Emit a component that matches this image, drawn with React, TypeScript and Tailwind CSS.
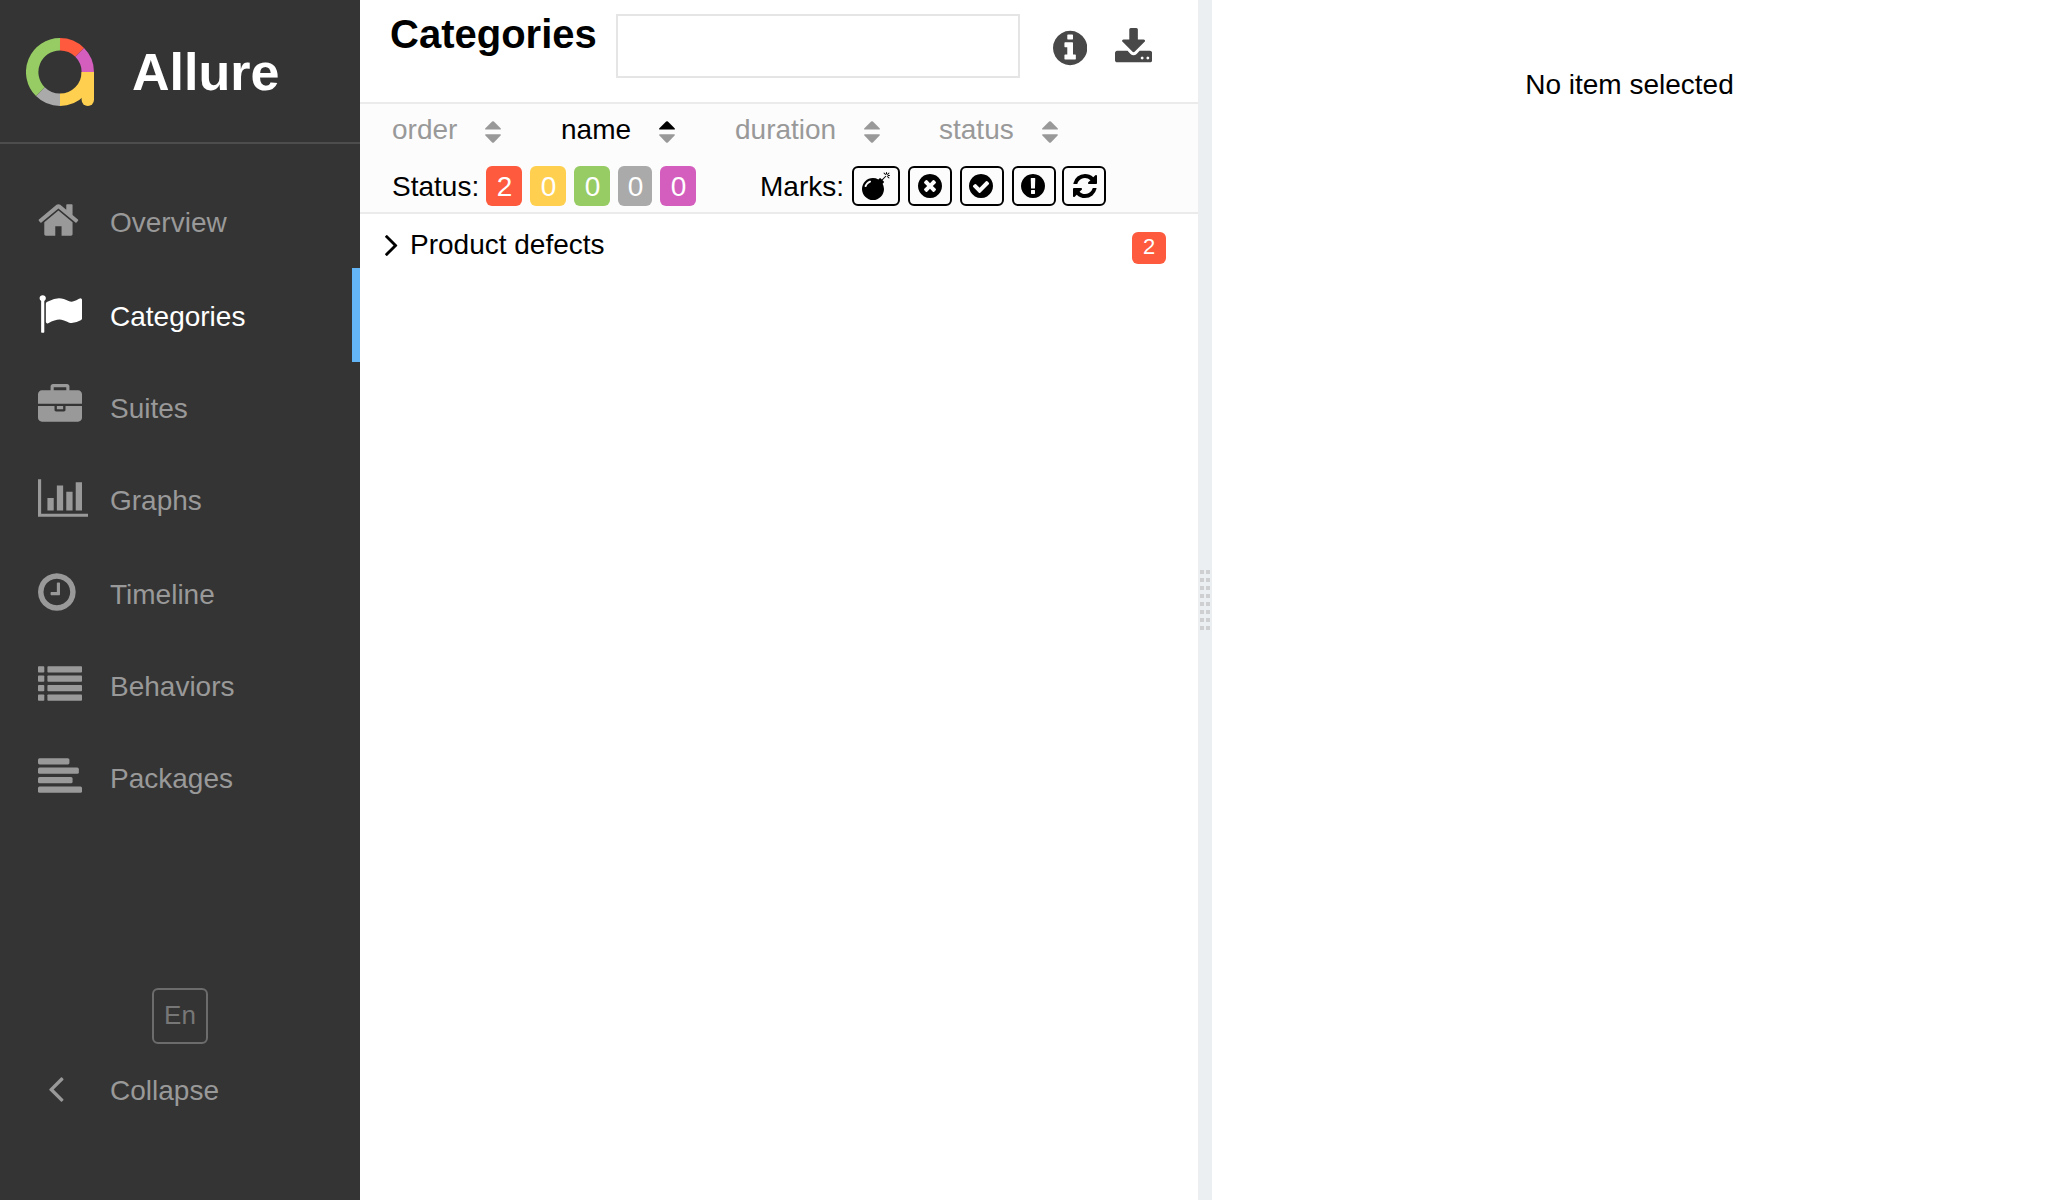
import React from "react";

const DISC =
  "M1664 896q0 209-103 385.5t-279.5 279.5-385.5 103-385.5-103-279.5-279.5-103-385.5 103-385.5 279.5-279.5 385.5-103 385.5 103 279.5 279.5 103 385.5z";

const PATHS = {
  home: "M1472 992v480q0 26-19 45t-45 19h-384v-384h-256v384h-384q-26 0-45-19t-19-45v-480q0-1 .5-3t.5-3l575-474 575 474q1 2 1 6zm223-69l-62 74q-8 9-21 11h-3q-13 0-21-7l-692-577-692 577q-12 8-24 7-13-2-21-11l-62-74q-8-10-7-23.5t11-21.5l719-599q32-26 76-26t76 26l244 204v-195q0-14 9-23t23-9h192q14 0 23 9t9 23v408l219 182q10 8 11 21.5t-7 23.5z",
  flag: "M320 256q0 72-64 110v1266q0 13-9.5 22.5t-22.5 9.5h-64q-13 0-22.5-9.5t-9.5-22.5v-1266q-64-38-64-110 0-53 37.5-90.5t90.5-37.5 90.5 37.5 37.5 90.5zm1472 64v763q0 25-12.5 38.5t-39.5 27.5q-215 116-369 116-61 0-123.5-22t-108.5-48-115.5-48-142.5-22q-192 0-464 146-17 9-33 9-26 0-45-19t-19-45v-742q0-32 31-55 21-14 79-43 236-120 421-120 107 0 200 29t219 88q38 19 88 19 54 0 117.5-21t110-47 88-47 54.5-21q26 0 45 19t19 45z",
  briefcase:
    "M640 256h512v-128h-512v128zm1152 640v480q0 66-47 113t-113 47h-1472q-66 0-113-47t-47-113v-480h672v160q0 26 19 45t45 19h320q26 0 45-19t19-45v-160h672zm-768 0v128h-256v-128h256zm768-480v384h-1792v-384q0-66 47-113t113-47h352v-160q0-40 28-68t68-28h576q40 0 68 28t28 68v160h352q66 0 113 47t47 113z",
  chart:
    "M640 896v512h-256v-512h256zm384-512v1024h-256v-1024h256zm1024 1152v128h-2048v-1536h128v1408h1920zm-640-896v768h-256v-768h256zm384-384v1152h-256v-1152h256z",
  clock:
    "M1024 544v448q0 14-9 23t-23 9h-320q-14 0-23-9t-9-23v-64q0-14 9-23t23-9h224v-352q0-14 9-23t23-9h64q14 0 23 9t9 23zm416 352q0-148-73-273t-198-198-273-73-273 73-198 198-73 273 73 273 198 198 273 73 273-73 198-198 73-273z" + DISC,
  angleLeft:
    "M1203 544q0 13-10 23l-393 393 393 393q10 10 10 23t-10 23l-50 50q-10 10-23 10t-23-10l-466-466q-10-10-10-23t10-23l466-466q10-10 23-10t23 10l50 50q10 10 10 23z",
  info:
    "M1152 1376v-160q0-14-9-23t-23-9h-96v-512q0-14-9-23t-23-9h-320q-14 0-23 9t-9 23v160q0 14 9 23t23 9h96v320h-96q-14 0-23 9t-9 23v160q0 14 9 23t23 9h448q14 0 23-9t9-23zm-128-896v-160q0-14-9-23t-23-9h-192q-14 0-23 9t-9 23v160q0 14 9 23t23 9h192q14 0 23-9t9-23z" + DISC,
  download:
    "M1344 1344q0-26-19-45t-45-19-45 19-19 45 19 45 45 19 45-19 19-45zm256 0q0-26-19-45t-45-19-45 19-19 45 19 45 45 19 45-19 19-45zm128-224v320q0 40-28 68t-68 28h-1472q-40 0-68-28t-28-68v-320q0-40 28-68t68-28h465l135 136q58 56 136 56t136-56l136-136h464q40 0 68 28t28 68zm-325-569q17 41-14 70l-448 448q-18 19-45 19t-45-19l-448-448q-31-29-14-70 17-39 59-39h256v-448q0-26 19-45t45-19h256q26 0 45 19t19 45v448h256q42 0 59 39z",
  bomb: "M571 589q-10-25-34-35t-49 0q-108 44-191 127t-127 191q-10 25 0 49t35 34q13 5 24 5 42 0 60-40 34-84 98.5-148.5t148.5-98.5q25-11 35-35t0-49zm942-356l46 46-244 243 68 68q19 19 19 45.5t-19 45.5l-64 64q89 161 89 343 0 143-55.5 273.5t-150 225-225 150-273.5 55.5-273.5-55.5-225-150-150-225-55.5-273.5 55.5-273.5 150-225 225-150 273.5-55.5q182 0 343 89l64-64q19-19 45.5-19t45.5 19l68 68zm8-56q-10 10-22 10-13 0-23-10l-91-90q-9-10-9-23t9-23q10-9 23-9t23 9l90 91q10 9 10 22.5t-10 22.5zm230 230q-11 9-23 9t-23-9l-90-91q-10-9-10-22.5t10-22.5q9-10 22.5-10t22.5 10l91 90q9 10 9 23t-9 23zm41-183q0 14-9 23t-23 9h-96q-14 0-23-9t-9-23 9-23 23-9h96q14 0 23 9t9 23zm-192-192v96q0 14-9 23t-23 9-23-9-9-23v-96q0-14 9-23t23-9 23 9 9 23zm151 55l-91 90q-10 10-22 10-13 0-23-10-10-9-10-22.5t10-22.5l90-91q10-9 23-9t23 9q9 10 9 23t-9 23z",
  times:
    "M1277 1122q0-26-19-45l-181-181 181-181q19-19 19-45 0-27-19-46l-90-90q-19-19-46-19-26 0-45 19l-181 181-181-181q-19-19-45-19-27 0-46 19l-90 90q-19 19-19 46 0 26 19 45l181 181-181 181q-19 19-19 45 0 27 19 46l90 90q19 19 46 19 26 0 45-19l181-181 181 181q19 19 45 19 27 0 46-19l90-90q19-19 19-46z" + DISC,
  check:
    "M1412 734q0-28-18-46l-91-90q-19-19-45-19t-45 19l-408 407-226-226q-19-19-45-19t-45 19l-91 90q-18 18-18 46 0 27 18 45l362 362q19 19 45 19 27 0 46-19l543-543q18-18 18-45z" + DISC,
  exclamation:
    "M1024 1375v-190q0-14-9-23.5t-22-9.5h-192q-13 0-23 10t-10 23v190q0 13 10 23t23 10h192q13 0 22-9.5t9-23.5zm-2-344l18-621q0-12-10-18-10-8-24-8h-220q-14 0-24 8-10 6-10 18l17 621q0 10 10 17.5t24 7.5h185q14 0 23.5-7.5t10.5-17.5z" + DISC,
  refresh:
    "M1639 1056q0 5-1 7-64 268-268 434.5t-478 166.5q-146 0-282.5-55t-243.5-157l-129 129q-19 19-45 19t-45-19-19-45v-448q0-26 19-45t45-19h448q26 0 45 19t19 45-19 45l-137 137q71 66 161 102t187 36q134 0 250-65t186-179q11-17 53-117 8-23 30-23h192q13 0 22.5 9.5t9.5 22.5zm25-800v448q0 26-19 45t-45 19h-448q-26 0-45-19t-19-45 19-45l138-138q-148-137-349-137-134 0-250 65t-186 179q-11 17-53 117-8 23-30 23h-199q-13 0-22.5-9.5t-9.5-22.5v-7q65-268 270-434.5t480-166.5q146 0 284 55.5t245 156.5l130-129q19-19 45-19t45 19 19 45z",
};

type IconName = keyof typeof PATHS;

/** Glyph on a 1792-unit em square; `left` and `span` trim the side bearings. */
function Glyph({ name, em, left = 0, span = 1792, className = "" }: {
  name: IconName;
  em: number;
  left?: number;
  span?: number;
  className?: string;
}) {
  return (
    <svg
      className={"block shrink-0 " + className}
      width={(span / 1792) * em}
      height={em}
      viewBox={`${left} 0 ${span} 1792`}
      fill="currentColor"
    >
      <path fillRule="evenodd" d={PATHS[name]} />
    </svg>
  );
}

function ListGlyph() {
  return (
    <svg className="mt-[0.5px] block" width={44} height={44} viewBox="0 0 1792 1792" fill="currentColor">
      {[128, 512, 896, 1280].map((y) => (
        <g key={y}>
          <rect x={0} y={y} width={256} height={256} rx={32} />
          <rect x={384} y={y} width={1408} height={256} rx={32} />
        </g>
      ))}
    </svg>
  );
}

function AlignLeftGlyph() {
  return (
    <svg className="mt-[0.5px] block" width={44} height={44} viewBox="0 0 1792 1792" fill="currentColor">
      {[1280, 1664, 1408, 1792].map((w, i) => (
        <rect key={w} x={0} y={128 + i * 384} width={w} height={256} rx={64} />
      ))}
    </svg>
  );
}

function Logo() {
  return (
    <svg className="block" width={68} height={68} viewBox="0 0 68 68" fill="none" strokeWidth={12.4}>
      <path stroke="#fd5a3e" d="M34 6.2A27.8 27.8 0 0 1 53.66 14.34" />
      <path stroke="#d35ebe" d="M53.66 14.34A27.8 27.8 0 0 1 61.8 34" />
      <path stroke="#ffd050" d="M61.8 34A27.8 27.8 0 0 1 34 61.8" />
      <path stroke="#aaaaaa" d="M34 61.8A27.8 27.8 0 0 1 14.34 53.66" />
      <path stroke="#97cc64" d="M14.34 53.66A27.8 27.8 0 0 1 34 6.2" />
      <path fill="#ffd050" d="M55.6 34H68V61.8A6.2 6.2 0 0 1 55.6 61.8Z" />
    </svg>
  );
}

const NAV: { label: string; icon: React.ReactNode; height: string; active?: boolean }[] = [
  { label: "Overview", icon: <Glyph name="home" em={44} left={64} span={1664} />, height: "h-[94px]" },
  { label: "Categories", icon: <Glyph name="flag" em={44} />, height: "h-[92px]", active: true },
  { label: "Suites", icon: <Glyph name="briefcase" em={44} />, height: "h-[92px]" },
  { label: "Graphs", icon: <Glyph name="chart" em={44} span={2048} />, height: "h-[94px]" },
  { label: "Timeline", icon: <Glyph name="clock" em={44} left={128} span={1536} />, height: "h-[92px]" },
  { label: "Behaviors", icon: <ListGlyph />, height: "h-[92px]" },
  { label: "Packages", icon: <AlignLeftGlyph />, height: "h-[92px]" },
];

function Sidebar() {
  return (
    <aside className="flex w-[360px] shrink-0 flex-col bg-[#343434] text-[#999999]">
      <div className="flex h-36 items-start border-b-2 border-[#4d4d4d] pt-[38px] pl-[26px]">
        <Logo />
        <span className="ml-[38px] text-[52px] leading-[68px] font-bold text-white">Allure</span>
      </div>
      <nav className="pt-[30px]">
        {NAV.map((item) => (
          <a
            key={item.label}
            className={"relative flex pt-6 pl-[38px] " + item.height + (item.active ? " text-white" : "")}
          >
            <span className="w-[72px] shrink-0">{item.icon}</span>
            <span className="pt-[5px] leading-10">{item.label}</span>
            {item.active && <span className="absolute top-0 right-0 h-[94px] w-2 bg-[#64b5f6]" />}
          </a>
        ))}
      </nav>
      <div className="mt-auto h-[212px]">
        <button className="mx-auto block h-14 w-14 rounded-md border-2 border-[#6c6c6c] pb-0.5 text-[26px] leading-[50px] text-[#777777]">
          En
        </button>
        <a className="mt-[22px] flex pl-[34px]">
          <Glyph name="angleLeft" em={44} className="mr-8" />
          <span className="pt-[5px] leading-10">Collapse</span>
        </a>
      </div>
    </aside>
  );
}

function Sorter({ label, width, asc }: { label: string; width: string; asc?: boolean }) {
  return (
    <div className={"flex gap-7 " + width}>
      <span className={"pt-px leading-10 " + (asc ? "text-black" : "text-[#999999]")}>{label}</span>
      <svg className="mt-3 block shrink-0" width={16} height={22} viewBox="0 0 16 22">
        <path
          fill={asc ? "#000000" : "#999999"}
          d="M1 8.6Q-.5 8.6 .4 7.3L7.1.6Q8 -.2 8.9.6L15.6 7.3Q16.5 8.6 15 8.6Z"
        />
        <path fill="#999999" d="M1 13.2Q-.5 13.2 .4 14.6L7.1 21.4Q8 22.2 8.9 21.4L15.6 14.6Q16.5 13.2 15 13.2Z" />
      </svg>
    </div>
  );
}

const STATUSES = [
  { count: 2, style: "w-9 bg-[#fd5a3e]" },
  { count: 0, style: "w-9 bg-[#ffd050]" },
  { count: 0, style: "w-9 bg-[#97cc64]" },
  { count: 0, style: "w-[34px] bg-[#aaaaaa]" },
  { count: 0, style: "w-9 bg-[#d35ebe]" },
];

const MARKS: { name: IconName; style: string }[] = [
  { name: "bomb", style: "w-12 mr-2 pl-2" },
  { name: "times", style: "w-11 mr-2 pl-2" },
  { name: "check", style: "w-11 mr-2 pl-[7px]" },
  { name: "exclamation", style: "w-11 mr-1.5 pl-[7px]" },
  { name: "refresh", style: "w-11 pl-[9px]" },
];

function CategoriesPane() {
  return (
    <section className="flex w-[838px] shrink-0 flex-col bg-white">
      <header className="flex h-[102px] items-start pl-[30px]">
        <h1 className="w-[226px] pt-[11px] text-[40px] leading-[46px] font-bold">Categories</h1>
        <input className="mt-3.5 h-16 w-[404px] border-2 border-[#e5e5e5] bg-white px-4 outline-none" />
        <span className="mt-7 ml-[33px] text-[#484848]">
          <Glyph name="info" em={40} left={128} span={1536} />
        </span>
        <span className="mt-[27.5px] ml-7 text-[#484848]">
          <Glyph name="download" em={40} left={64} span={1664} />
        </span>
      </header>
      <div className="h-28 border-y-2 border-[#ebebeb] bg-[#fcfcfc] pl-8">
        <div className="flex h-[62px] pt-[5px]">
          <Sorter label="order" width="w-[169px]" />
          <Sorter label="name" width="w-[174px]" asc />
          <Sorter label="duration" width="w-[204px]" />
          <Sorter label="status" width="w-[160px]" />
        </div>
        <div className="flex h-10">
          <span className="w-[94px] leading-[42px]">Status:</span>
          <div className="flex w-[274px] gap-2">
            {STATUSES.map((s, i) => (
              <span key={i} className={"h-10 rounded-md pl-px text-center leading-[42px] text-white " + s.style}>
                {s.count}
              </span>
            ))}
          </div>
          <span className="w-[92px] leading-[42px]">Marks:</span>
          {MARKS.map((m) => (
            <span key={m.name} className={"h-10 shrink-0 rounded-md border-2 border-black pt-1 " + m.style}>
              {m.name === "bomb" ? (
                <Glyph name="bomb" em={28} />
              ) : (
                <Glyph name={m.name} em={28} left={128} span={1536} />
              )}
            </span>
          ))}
        </div>
      </div>
      <div className="flex h-16 items-start pt-[18px] pr-8 pl-[25px]">
        <svg className="mt-[3px] block shrink-0" width={13} height={21} viewBox="589 461 614 998">
          <path transform="translate(1792 0) scale(-1 1)" d={PATHS.angleLeft} />
        </svg>
        <span className="-mt-[7px] ml-3 leading-10">Product defects</span>
        <span className="ml-auto h-8 w-[34px] rounded-md bg-[#fd5a3e] text-center text-[22px] leading-[30px] text-white">
          2
        </span>
      </div>
    </section>
  );
}

function Gutter() {
  return (
    <div className="flex w-3.5 shrink-0 items-center justify-center bg-[#eceff1]">
      <div className="grid grid-cols-2 gap-x-0.5 gap-y-1">
        {Array.from({ length: 16 }, (_, i) => (
          <span key={i} className="h-1 w-1 bg-[#cdcfd0]" />
        ))}
      </div>
    </div>
  );
}

export default function App() {
  return (
    <div className="flex h-[1200px] w-[2048px] overflow-hidden bg-white font-['Liberation_Sans',Arial,sans-serif] text-[28px] text-black">
      <Sidebar />
      <CategoriesPane />
      <Gutter />
      <main className="flex-1 pt-[65px] pr-px text-center leading-10">No item selected</main>
    </div>
  );
}
